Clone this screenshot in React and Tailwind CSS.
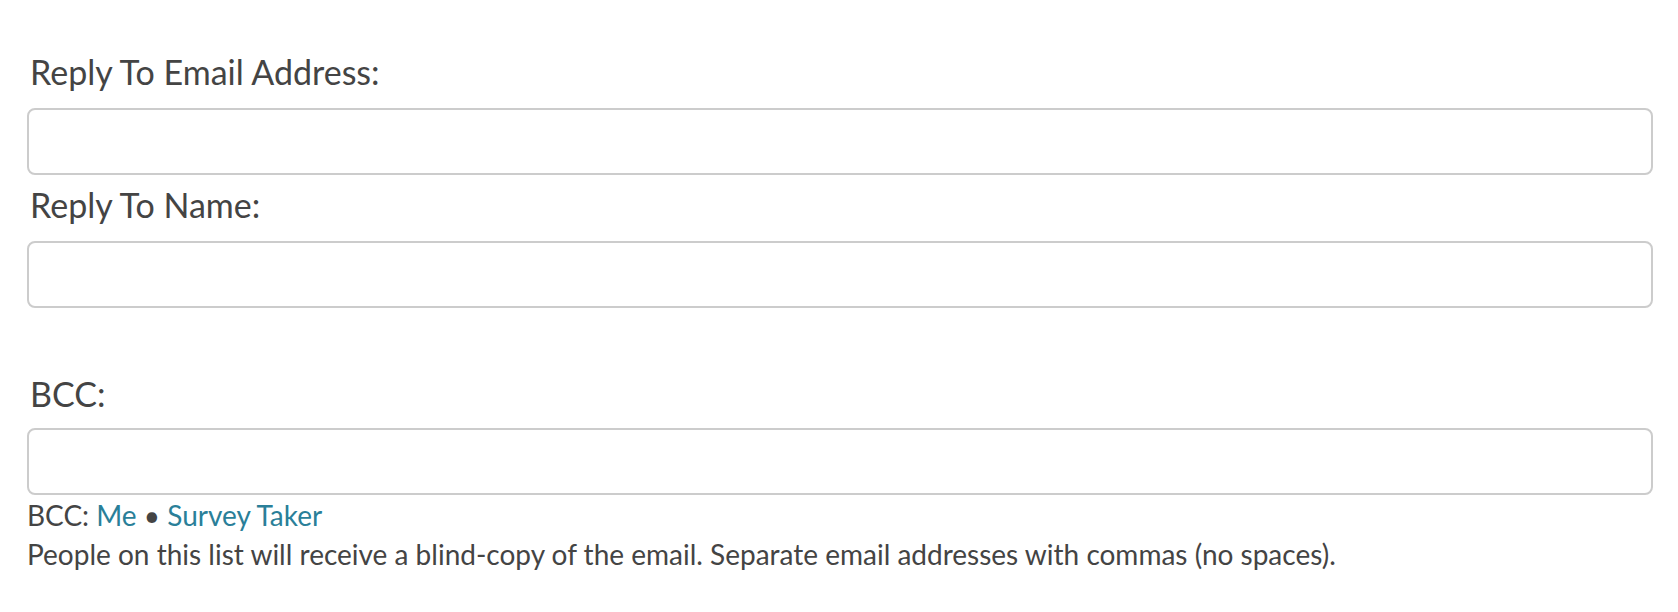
export default function App() {
  return (
    <div className="min-h-[612px] bg-white pl-[27px] pr-[25px] pt-[50px] font-['Lato',sans-serif] text-[#444]">
      <label className="block pl-[3px] text-[34px] leading-[44px]">Reply To Email Address:</label>
      <input
        type="text"
        className="mt-[14px] block h-[67px] w-full rounded-[8px] border-2 border-[#cccccc] bg-white px-3 outline-none"
      />

      <label className="mt-[8px] block pl-[3px] text-[34px] leading-[44px]">Reply To Name:</label>
      <input
        type="text"
        className="mt-[14px] block h-[67px] w-full rounded-[8px] border-2 border-[#cccccc] bg-white px-3 outline-none"
      />

      <label className="mt-[64px] block pl-[3px] text-[34px] leading-[44px]">BCC:</label>
      <input
        type="text"
        className="mt-[12px] block h-[67px] w-full rounded-[8px] border-2 border-[#cccccc] bg-white px-3 outline-none"
      />

      <div className="mt-[1px] text-[28px] leading-[39px]">
        BCC: <a href="#" className="text-[#2a7f99]">Me</a> • <a href="#" className="text-[#2a7f99]">Survey Taker</a>
      </div>
      <div className="text-[28px] leading-[39px]">
        People on this list will receive a blind-copy of the email. Separate email addresses with commas (no spaces).
      </div>
    </div>
  );
}
